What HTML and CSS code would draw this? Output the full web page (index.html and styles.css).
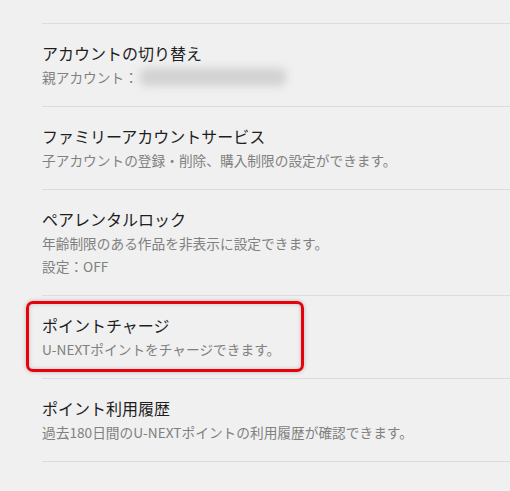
FILE: index.html
```html
<!DOCTYPE html>
<html lang="ja">
<head>
<meta charset="utf-8">
<link rel="stylesheet" href="styles.css">
</head>
<body>
<ul class="menu">
  <li class="item">
    <div class="title">アカウントの切り替え</div>
    <div class="desc">親アカウント：<span class="blur"></span></div>
  </li>
  <li class="item">
    <div class="title">ファミリーアカウントサービス</div>
    <div class="desc">子アカウントの登録・削除、購入制限の設定ができます。</div>
  </li>
  <li class="item">
    <div class="title">ペアレンタルロック</div>
    <div class="desc">年齢制限のある作品を非表示に設定できます。</div>
    <div class="desc">設定：OFF</div>
  </li>
  <li class="item highlighted">
    <div class="title">ポイントチャージ</div>
    <div class="desc">U-NEXTポイントをチャージできます。</div>
    <span class="mark"></span>
  </li>
  <li class="item">
    <div class="title">ポイント利用履歴</div>
    <div class="desc">過去180日間のU-NEXTポイントの利用履歴が確認できます。</div>
  </li>
</ul>
</body>
</html>
```

FILE: styles.css
```css
html, body {
  margin: 0;
  padding: 0;
  background: #f0f0f0;
}
body {
  font-family: "Noto Sans CJK JP", "Noto Sans", sans-serif;
}
.menu {
  list-style: none;
  margin: 0;
  padding: 23px 0 0 42px;
}
.item {
  position: relative;
  border-top: 1px solid #dcdcdc;
  padding: 17px 0;
}
.item:last-child {
  border-bottom: 1px solid #dcdcdc;
}
.title {
  font-size: 16px;
  line-height: 24px;
  color: #1e1e1e;
}
.desc {
  font-size: 13.7px;
  line-height: 24px;
  color: #808080;
  display: flex;
  align-items: center;
}
.desc + .desc {
  line-height: 23px;
}
.blur {
  display: inline-block;
  width: 146px;
  height: 18px;
  margin-left: 2px;
  background: #d2d2d2;
  border-radius: 6px;
  filter: blur(4px);
}
.mark {
  position: absolute;
  left: -16px;
  top: 5px;
  width: 272px;
  height: 65px;
  border: 3.5px solid #e8000b;
  border-radius: 7px;
  box-shadow: 0 0 4px rgba(0,0,0,0.25), inset 0 0 4px rgba(0,0,0,0.2);
}
```
